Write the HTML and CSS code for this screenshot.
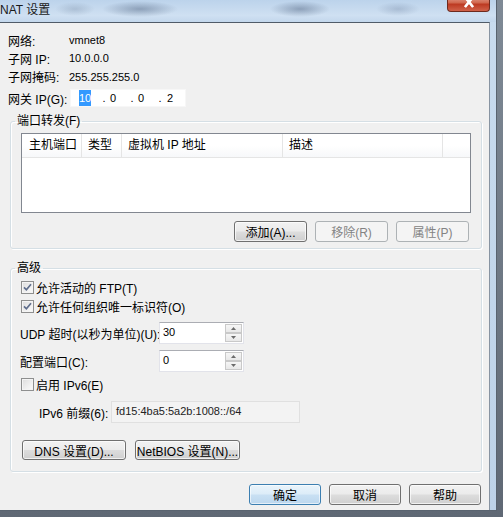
FILE: index.html
```html
<!DOCTYPE html>
<html lang="zh-CN">
<head>
<meta charset="utf-8">
<title>NAT 设置</title>
<link rel="stylesheet" href="styles.css">
</head>
<body>
<div class="window">
  <div class="titlebar">
    <span class="title">NAT 设置</span>
    <span class="close"><svg width="12" height="8" viewBox="0 0 12 8"><path d="M2 -3 L10 7 M10 -3 L2 7" stroke="#fff" stroke-width="2.6" fill="none"/><path d="M2 -3 L10 7 M10 -3 L2 7" stroke="#fff" stroke-width="1.8" fill="none" opacity="0.9"/></svg></span>
  </div>
  <div class="client">
    <div class="info">
      <span>网络:</span><span class="val">vmnet8</span>
      <span>子网 IP:</span><span class="val">10.0.0.0</span>
      <span>子网掩码:</span><span class="val">255.255.255.0</span>
    </div>
    <div class="gw-row">
      <span class="gw-label">网关 IP(G):</span>
      <div class="ipbox val">
        <span class="oct first"><span class="sel">10</span></span><span class="dot">.</span><span class="oct">0</span><span class="dot">.</span><span class="oct">0</span><span class="dot">.</span><span class="oct last">2</span>
      </div>
    </div>

    <fieldset class="group pf">
      <legend>端口转发(F)</legend>
      <div class="listview">
        <div class="lv-header">
          <span class="col">主机端口</span>
          <span class="col">类型</span>
          <span class="col">虚拟机 IP 地址</span>
          <span class="col">描述</span>
          <span class="col end"></span>
        </div>
      </div>
      <div class="btn-row">
        <span class="btn">添加(A)...</span>
        <span class="btn disabled">移除(R)</span>
        <span class="btn disabled">属性(P)</span>
      </div>
    </fieldset>

    <fieldset class="group adv">
      <legend>高级</legend>
      <div class="check-row">
        <span class="cb"><svg width="9" height="9" viewBox="0 0 9 9"><path d="M1 4.3 L3.4 6.8 L8 1.3" fill="none" stroke="#5f6e8c" stroke-width="1.7"/></svg></span>
        <span>允许活动的 FTP(T)</span>
      </div>
      <div class="check-row">
        <span class="cb"><svg width="9" height="9" viewBox="0 0 9 9"><path d="M1 4.3 L3.4 6.8 L8 1.3" fill="none" stroke="#5f6e8c" stroke-width="1.7"/></svg></span>
        <span>允许任何组织唯一标识符(O)</span>
      </div>
      <div class="spin-row first">
        <span class="spin-label">UDP 超时(以秒为单位)(U):</span>
        <div class="spin">
          <span class="spin-val val">30</span>
          <span class="spin-btns">
            <span class="sb"><svg width="5" height="3" viewBox="0 0 5 3"><path d="M0 3 L2.5 0 L5 3Z" fill="#6b6b6b"/></svg></span>
            <span class="sb"><svg width="5" height="3" viewBox="0 0 5 3"><path d="M0 0 L2.5 3 L5 0Z" fill="#6b6b6b"/></svg></span>
          </span>
        </div>
      </div>
      <div class="spin-row">
        <span class="spin-label">配置端口(C):</span>
        <div class="spin">
          <span class="spin-val val">0</span>
          <span class="spin-btns">
            <span class="sb"><svg width="5" height="3" viewBox="0 0 5 3"><path d="M0 3 L2.5 0 L5 3Z" fill="#6b6b6b"/></svg></span>
            <span class="sb"><svg width="5" height="3" viewBox="0 0 5 3"><path d="M0 0 L2.5 3 L5 0Z" fill="#6b6b6b"/></svg></span>
          </span>
        </div>
      </div>
      <div class="check-row ipv6">
        <span class="cb"></span>
        <span>启用 IPv6(E)</span>
      </div>
      <div class="prefix-row">
        <span class="prefix-label">IPv6 前缀(6):</span>
        <span class="prefix-input val">fd15:4ba5:5a2b:1008::/64</span>
      </div>
      <div class="dns-row">
        <span class="btn small">DNS 设置(D)...</span>
        <span class="btn small">NetBIOS 设置(N)...</span>
      </div>
    </fieldset>

    <div class="footer">
      <span class="btn default">确定</span>
      <span class="btn">取消</span>
      <span class="btn">帮助</span>
    </div>
  </div>
</div>
</body>
</html>
```

FILE: styles.css
```css
html, body {
  margin: 0;
  padding: 0;
}
body {
  width: 503px;
  height: 517px;
  overflow: hidden;
  background: linear-gradient(180deg, #7f8a96 0%, #6c7682 60%, #5f6874 100%);
  font-family: "Liberation Sans", "Noto Sans CJK SC", sans-serif;
  font-size: 12px;
  color: #000;
}
.val {
  font-size: 11px;
}
.window {
  width: 497px;
  height: 511px;
  display: flex;
  flex-direction: column;
  background: linear-gradient(180deg, #c9dcef 0%, #bdd2e8 100%);
  border-right: 1px solid #59636f;
  border-bottom: 1px solid #59636f;
  box-sizing: border-box;
}
.titlebar {
  height: 22px;
  display: flex;
  align-items: flex-start;
  background:
    radial-gradient(ellipse 20px 7px at 75px 9px, rgba(120,140,165,0.35), transparent),
    radial-gradient(ellipse 38px 8px at 140px 9px, rgba(70,90,120,0.45), transparent),
    radial-gradient(ellipse 30px 8px at 300px 9px, rgba(70,90,120,0.45), transparent),
    radial-gradient(ellipse 22px 7px at 398px 9px, rgba(110,130,160,0.35), transparent),
    linear-gradient(180deg, #bcd3eb 0%, #cfe0f2 70%, #c3d7ec 100%);
  flex-shrink: 0;
}
.title {
  line-height: 20px;
  margin-left: 0;
  color: #1a1a1a;
}
.close {
  margin-left: auto;
  margin-right: 6px;
  margin-top: -4px;
  width: 43px;
  height: 16px;
  box-sizing: border-box;
  border: 1px solid #6e2a1e;
  border-top: none;
  border-radius: 0 0 4px 4px;
  background: linear-gradient(180deg, #e7a594 0%, #d0674e 45%, #bd3a22 55%, #d0624a 100%);
  display: flex;
  justify-content: center;
  align-items: flex-start;
  padding-top: 4px;
}
.client {
  flex: 1;
  margin-right: 6px;
  background: #f0f0f0;
  border-top: 1px solid #4f5b68;
  border-right: 1px solid #8894a2;
  padding: 0 8px 0 8px;
  box-sizing: border-box;
}
.info {
  display: grid;
  grid-template-columns: 61px auto;
  grid-template-rows: 18px 18px 19px;
  align-items: center;
  padding-top: 8px;
}
.gw-row {
  display: flex;
  align-items: center;
  height: 18px;
  margin-top: 3px;
}
.gw-label {
  width: 62px;
}
.ipbox {
  width: 116px;
  height: 18px;
  box-sizing: border-box;
  background: #fff;
  border: 1px solid #f7f7f7;
  display: flex;
  align-items: center;
  padding-left: 8px;
}
.oct {
  width: 22px;
  padding-left: 3px;
  box-sizing: border-box;
}
.oct.first {
  padding-left: 0;
}
.oct.last {
  padding-left: 4px;
}
.dot {
  width: 6px;
  text-align: center;
}
.sel {
  background: #3399ff;
  color: #fff;
  padding: 2px 0;
}
.group {
  box-sizing: border-box;
  width: 472px;
  margin: 0 0 0 2px;
  border: 1px solid #d5dfe5;
  border-radius: 3px;
  box-shadow: inset 1px 1px 0 #fff, 1px 1px 0 #fff;
  min-width: 0;
}
.group legend {
  padding: 0 2px;
  margin-left: -6px;
  line-height: 16px;
}
.pf {
  margin-top: 6px;
  padding: 4px 10px 6px 10px;
}
.listview {
  width: 450px;
  height: 80px;
  box-sizing: border-box;
  border: 1px solid #828790;
  background: #fff;
}
.lv-header {
  display: grid;
  grid-template-columns: 60px 40px 161px 160px 1fr;
  height: 23px;
  border-bottom: 1px solid #e5e5e5;
  background: linear-gradient(180deg, #ffffff 0%, #ffffff 50%, #f7f8fa 100%);
}
.col {
  line-height: 23px;
  padding-left: 6px;
  border-right: 1px solid #e5e5e5;
  white-space: nowrap;
}
.col:first-child {
  padding-left: 7px;
}
.col.end {
  border-right: none;
}
.btn-row {
  display: flex;
  justify-content: flex-end;
  gap: 8px;
  margin-top: 8px;
  padding-right: 2px;
}
.btn {
  width: 73px;
  height: 21px;
  box-sizing: border-box;
  border: 1px solid #707070;
  border-radius: 3px;
  background: linear-gradient(180deg, #f2f2f2 0%, #ebebeb 48%, #dddddd 52%, #cfcfcf 100%);
  box-shadow: inset 0 0 0 1px rgba(255,255,255,0.7);
  display: flex;
  align-items: center;
  justify-content: center;
  white-space: nowrap;
}
.btn.disabled {
  border-color: #adb2b5;
  background: #f4f4f4;
  color: #838383;
  box-shadow: none;
}
.btn.default {
  border-color: #3c7fb1;
  background: linear-gradient(180deg, #eaf4fb 0%, #dcecf8 48%, #c9e0f3 52%, #bcd7ee 100%);
  box-shadow: inset 0 0 0 1px rgba(255,255,255,0.6);
}
.btn.small {
  height: 20px;
}
.adv {
  margin-top: 11px;
  padding: 2px 10px 11px 10px;
}
.check-row {
  display: flex;
  align-items: center;
  gap: 2px;
  height: 19px;
}
.cb {
  width: 13px;
  height: 13px;
  box-sizing: border-box;
  border: 1px solid #8e8f8f;
  background: linear-gradient(135deg, #dcdcdc 0%, #f0f0f0 60%, #fbfbfb 100%);
  box-shadow: inset 0 0 0 1px #f4f4f4;
  display: flex;
  align-items: center;
  justify-content: center;
  flex-shrink: 0;
}
.spin-row {
  display: grid;
  grid-template-columns: 138px 85px;
  align-items: center;
  height: 22px;
  margin-top: 6px;
}
.spin-label {
  margin-left: -1px;
  white-space: nowrap;
}
.spin {
  height: 22px;
  box-sizing: border-box;
  border: 1px solid #e2e3ea;
  border-top-color: #abadb3;
  background: #fff;
  display: flex;
}
.spin-val {
  flex: 1;
  padding-left: 3px;
  line-height: 19px;
}
.spin-btns {
  width: 17px;
  display: flex;
  flex-direction: column;
  padding: 1px 1px 1px 0;
}
.sb {
  flex: 1;
  box-sizing: border-box;
  border: 1px solid #c9c9c9;
  background: linear-gradient(180deg, #f6f6f6 0%, #e8e8e8 100%);
  display: flex;
  align-items: center;
  justify-content: center;
}
.check-row.ipv6 {
  margin-top: 3px;
}
.prefix-row {
  display: flex;
  align-items: center;
  height: 22px;
  margin-top: 7px;
  padding-left: 18px;
}
.prefix-label {
  width: 72px;
  white-space: nowrap;
}
.prefix-input {
  width: 189px;
  height: 22px;
  box-sizing: border-box;
  border: 1px solid #e0e0e0;
  background: #f3f3f3;
  padding-left: 4px;
  line-height: 18px;
  color: #222;
}
.dns-row {
  display: flex;
  gap: 9px;
  margin-top: 17px;
  margin-left: 1px;
}
.dns-row .btn:first-child {
  width: 104px;
}
.dns-row .btn:last-child {
  width: 105px;
}
.footer {
  display: flex;
  justify-content: flex-end;
  gap: 8px;
  margin-top: 12px;
}
.footer .btn {
  width: 72px;
}
```
